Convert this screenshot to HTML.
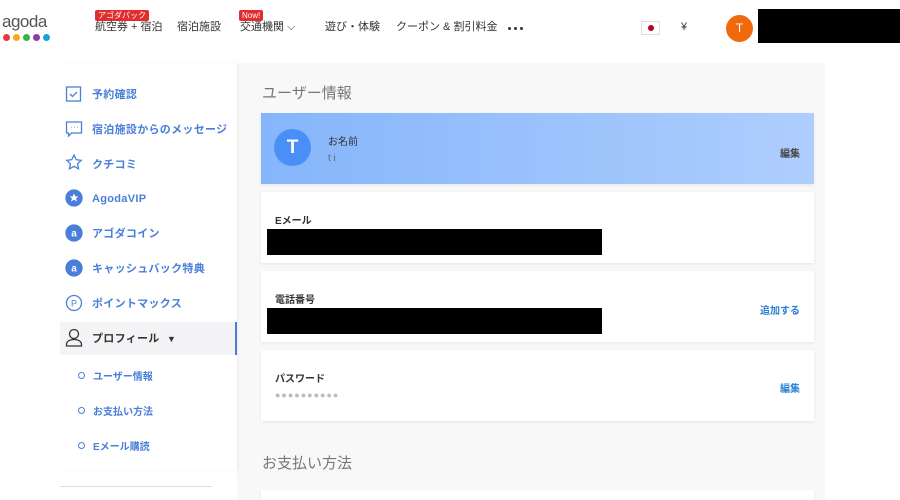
<!DOCTYPE html><html style="width:900px;height:500px;overflow:hidden"><head><meta charset="utf-8"><style>
*{margin:0;padding:0;box-sizing:border-box}
body{width:900px;height:500px;overflow:hidden;background:#fff;font-family:"Liberation Sans","Noto Sans CJK JP",sans-serif;position:relative;color:#333}
.a{position:absolute}
.nav{font-size:11px;color:#333;top:20px;line-height:14px}
.tag{background:#e12d2d;color:#fff;font-size:8px;padding:0 3px;border-radius:2px;line-height:11px}
.side{left:60px;top:63px;width:177px;height:407px;background:#fff;box-shadow:1px 0 3px rgba(0,0,0,.06)}
.si{left:92px;font-size:11px;font-weight:bold;color:#4a7fd9;letter-spacing:.3px;line-height:14px}
.sub{left:78px;font-size:10px;font-weight:bold;color:#4a7fd9;line-height:14px}
.sub:before{content:"";display:inline-block;width:5px;height:5px;border:1.5px solid #4a7fd9;border-radius:50%;margin-right:8px;vertical-align:1px}
.card{left:261px;width:553px;height:71px;background:#fff;box-shadow:0 1px 3px rgba(0,0,0,.08)}
.lbl{left:14px;font-size:10px;font-weight:bold;color:#333}
.bar{left:6px;width:335px;height:26px;background:#000}
.act{right:14px;font-size:10px;font-weight:bold;color:#2a7fd4}
</style></head><body>
<div class="a" style="left:2px;top:12px;font-size:17px;color:#555;letter-spacing:-.5px">agoda</div>
<div class="a" style="left:3px;top:34px;display:flex;gap:3px">
<span style="width:7px;height:7px;border-radius:50%;background:#e8383d"></span><span style="width:7px;height:7px;border-radius:50%;background:#f6a81c"></span><span style="width:7px;height:7px;border-radius:50%;background:#31b44b"></span><span style="width:7px;height:7px;border-radius:50%;background:#8a3ea5"></span><span style="width:7px;height:7px;border-radius:50%;background:#17a3e0"></span></div>
<div class="a tag" style="left:95px;top:10px">アゴダパック</div>
<div class="a nav" style="left:95px">航空券 + 宿泊</div>
<div class="a nav" style="left:177px">宿泊施設</div>
<div class="a tag" style="left:239px;top:10px">Now!</div>
<div class="a nav" style="left:240px">交通機関 ⌵</div>
<div class="a nav" style="left:325px">遊び・体験</div>
<div class="a nav" style="left:396px">クーポン & 割引料金</div>
<div class="a" style="left:508px;top:27px;display:flex;gap:3px"><span style="width:3px;height:3px;border-radius:50%;background:#333"></span><span style="width:3px;height:3px;border-radius:50%;background:#333"></span><span style="width:3px;height:3px;border-radius:50%;background:#333"></span></div>
<div class="a" style="left:641px;top:21px;width:19px;height:14px;border:1px solid #ddd;background:#fff"><div style="width:6px;height:6px;border-radius:50%;background:#bc0024;margin:3px auto"></div></div>
<div class="a" style="left:681px;top:21px;font-size:11px">¥</div>
<div class="a" style="left:726px;top:15px;width:27px;height:27px;border-radius:50%;background:#f06a0c;color:#fff;font-size:12px;text-align:center;line-height:27px">T</div>
<div class="a" style="left:758px;top:9px;width:142px;height:34px;background:#000"></div>

<div class="a" style="left:237px;top:63px;width:588px;height:437px;background:#f8f8f8"></div>
<div class="a side"></div>
<div class="a" style="left:60px;top:322px;width:177px;height:33px;background:#f4f4f6;border-right:2px solid #4a7fd9"></div>
<div class="a" style="left:60px;top:486px;width:152px;height:1px;background:#ddd"></div>
<svg class="a" style="left:65px;top:84px" width="20" height="272" fill="none" stroke="#4a7fd9" stroke-width="1.3">
<rect x="1.5" y="3" width="14" height="14"/><path d="M5 10l2.5 2.5L12 8"/>
<path d="M1.5 38h15v11h-10l-3 3v-3h-2z"/><path d="M6 43.5h.5M9 43.5h.5M12 43.5h.5"/>
<path d="M9 71l2.2 4.6 5 .7-3.6 3.5.9 5L9 82.4 4.5 84.8l.9-5-3.6-3.5 5-.7z"/>
<circle cx="9" cy="114" r="8" fill="#4a7fd9"/><path d="M9 109.5l1.4 3h3l-2.4 2 1 3L9 115.7l-3 1.8 1-3-2.4-2h3z" fill="#fff" stroke="none"/>
<circle cx="9" cy="149" r="8" fill="#4a7fd9"/><text x="9" y="152.5" font-size="10" font-weight="bold" fill="#fff" stroke="none" text-anchor="middle" font-family="Liberation Sans">a</text>
<circle cx="9" cy="184" r="8" fill="#4a7fd9"/><text x="9" y="187.5" font-size="10" font-weight="bold" fill="#fff" stroke="none" text-anchor="middle" font-family="Liberation Sans">a</text>
<circle cx="9" cy="219" r="7.5"/><text x="9" y="222.5" font-size="9" fill="#4a7fd9" stroke="none" text-anchor="middle" font-family="Liberation Sans">P</text>
<g stroke="#333"><circle cx="9" cy="250" r="4.5"/><path d="M1.5 262v-1.5c0-3 3-5 7.5-5s7.5 2 7.5 5v1.5z"/></g>
</svg>
<div class="a si" style="top:88px">予約確認</div>
<div class="a si" style="top:123px">宿泊施設からのメッセージ</div>
<div class="a si" style="top:158px">クチコミ</div>
<div class="a si" style="top:192px">AgodaVIP</div>
<div class="a si" style="top:227px">アゴダコイン</div>
<div class="a si" style="top:262px">キャッシュバック特典</div>
<div class="a si" style="top:297px">ポイントマックス</div>
<div class="a si" style="top:332px;color:#333">プロフィール <span style="font-size:9px;margin-left:4px">▼</span></div>
<div class="a sub" style="top:371px">ユーザー情報</div>
<div class="a sub" style="top:406px">お支払い方法</div>
<div class="a sub" style="top:441px">Eメール購読</div>

<div class="a" style="left:262px;top:82px;font-size:15px;color:#777">ユーザー情報</div>
<div class="a card" style="top:113px;background:linear-gradient(90deg,#85b5fb,#aecefd)">
<div class="a" style="left:13px;top:16px;width:37px;height:37px;border-radius:50%;background:#4a8ff5;color:#fff;font-size:19px;font-weight:bold;text-align:center;line-height:37px">T</div>
<div class="a" style="left:67px;top:20px;font-size:10px;color:#333">お名前</div>
<div class="a" style="left:67px;top:40px;font-size:10px;color:#666">t i</div>
<div class="a" style="right:14px;top:32px;font-size:10px;font-weight:bold;color:#444">編集</div></div>
<div class="a card" style="top:192px"><div class="a lbl" style="top:20px">Eメール</div><div class="a bar" style="top:37px"></div></div>
<div class="a card" style="top:271px"><div class="a lbl" style="top:20px">電話番号</div><div class="a bar" style="top:37px"></div><div class="a act" style="top:31px">追加する</div></div>
<div class="a card" style="top:350px"><div class="a lbl" style="top:20px">パスワード</div><div class="a" style="left:14px;top:40px;font-size:9px;color:#bbb;letter-spacing:1px">●●●●●●●●●●</div><div class="a act" style="top:30px">編集</div></div>
<div class="a" style="left:262px;top:452px;font-size:15px;color:#777">お支払い方法</div>
<div class="a card" style="top:490px;height:10px"></div>
</body></html>
